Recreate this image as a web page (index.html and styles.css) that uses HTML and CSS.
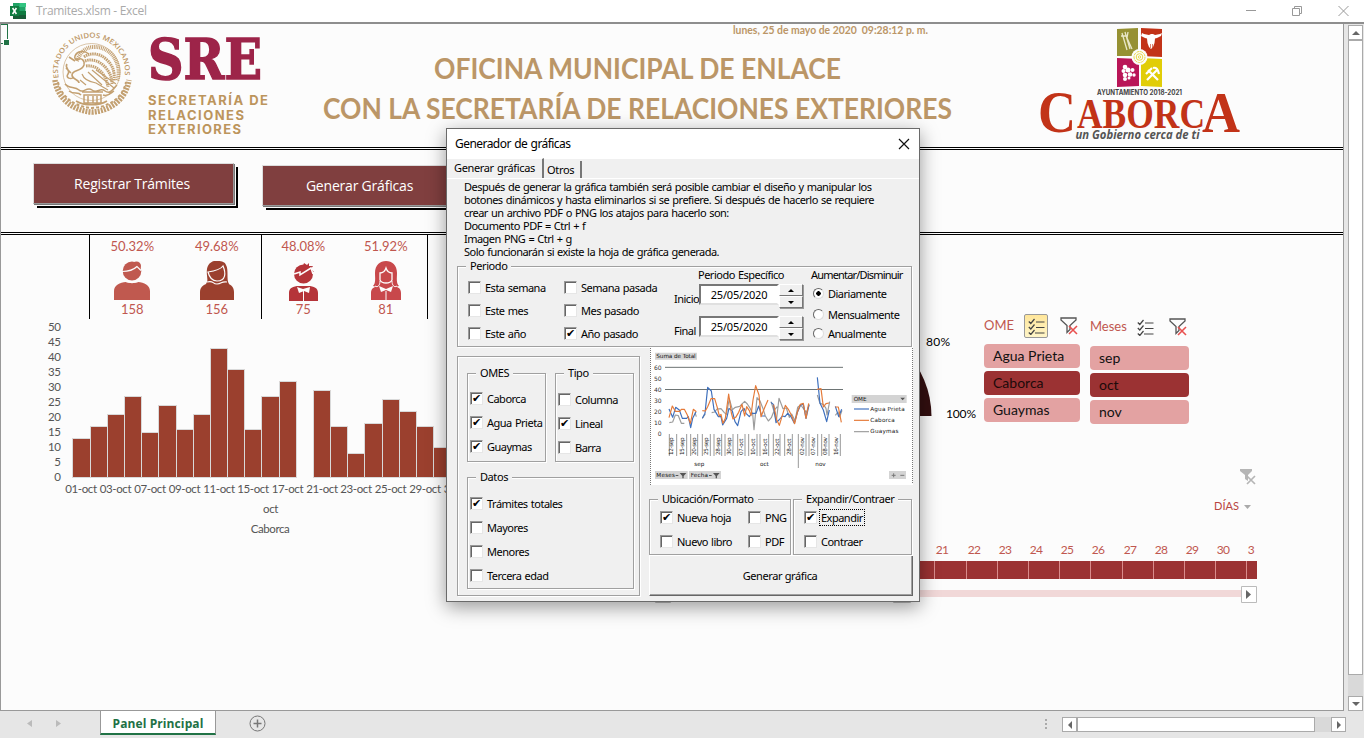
FILE: index.html
```html
<!DOCTYPE html>
<html lang="es">
<head>
<meta charset="utf-8">
<title>Tramites.xlsm - Excel</title>
<link rel="stylesheet" href="styles.css">
</head>
<body>
<svg class="defs" width="0" height="0">
  <defs>
    <symbol id="checks" viewBox="0 0 17 17"><g fill="none" stroke="#444" stroke-width="1.200"><path d="M.8 3.500l2 2L6.500 1M.8 9l2 2 3.700-4.500M.8 14.500l2 2 3.700-4.500M8 4h8.500M8 9.500h8.500M7 15h9.500"/></g></symbol>
    <symbol id="funnel" viewBox="0 0 18 18"><path d="M1 1h15v2l-6 5.500v4l-3 3V8.500L1 3z" fill="none" stroke="#555" stroke-width="1.300"/><path d="M9 9l8 8M17 9l-8 8" stroke="#e8504f" stroke-width="1.600"/></symbol>
  </defs>
</svg>

<header class="titlebar">
  <svg class="xl" width="16" height="16" viewBox="0 0 16 16"><path fill="#21a366" d="M3 0h12.500v16H3z"/><path fill="#33c481" d="M9.500 0H16v4H9.500z"/><path fill="#107c41" d="M3 4h6.500v8H3zM9.500 8H16v4H9.500z"/><path fill="#185c37" d="M3 12h13v4H3z"/><path fill="#107c41" d="M0 3h9v10H0z"/><path d="M2.600 5l3.800 6M6.400 5l-3.800 6" stroke="#fff" stroke-width="1.500"/></svg>
  <span class="app-title">Tramites.xlsm - Excel</span>
  <svg class="win" width="104" height="12" viewBox="0 0 104 12" fill="none" stroke="#999"><path d="M0 5.500h10M46.500 3.500h7v7h-7zM48.500 3V1.500h7v7H54M92.500 1l10 10M102.500 1l-10 10"/></svg>
</header>

<div class="main">
<main class="sheet">
  <i class="cell"></i>
  <section class="band head">
    <svg class="sre" width="222" height="110" viewBox="50 28 222 110">
      <path id="ring" d="M58.700 78A33.500 33.500 0 1 1 124.300 78" fill="none"/>
      <text class="seal"><textPath href="#ring" textLength="116" lengthAdjust="spacingAndGlyphs">ESTADOS UNIDOS MEXICANOS</textPath></text>
      <g fill="none" stroke="#c3a071">
        <circle cx="91.500" cy="72" r="28.500" stroke-width=".6"/>
        <path d="M55 80c2 17 17 31 37 32 19-1 34-13 37-32" stroke-width="5.500" stroke-dasharray="2 1.100"/>
        <path d="M58 82c3 14 16 25 34 26 18-1 31-11 34-26" stroke-width="2" stroke-dasharray="3 2"/>
        <path d="M77 61c2-6 6-11 11-13 8-3 20 0 26 9 5 8 6 16 3 24" stroke-width="4" stroke-dasharray="1 .8"/>
        <path d="M84 57c7-5 16-4 23 3 6 6 8 12 7 21M85 61c8-3 16 1 21 7 4 5 6 10 6 16M86 66c8-1 13 3 17 8 3 4 4 8 5 13" stroke-width="3" stroke-dasharray="1.500 .7"/>
        <path d="M89 54c-5-4-12-3-14 2-1 3 1 4 4 3s6 2 5 6c-2 7-12 4-12 10 0 5 7 4 7 8M67 64c-3 4 4 6 1 10s3 6 6 3M69 57l6 4M66 68l5 5" stroke-width="1.600"/>
        <path d="M82 74c2 6 8 8 14 9l12 7M80 80l6 5M92 70l22 18M96 70l20 14M88 72l14 13" stroke-width="1.200"/>
        <path d="M65 84c4 5 10 2 14 6s8-4 13 0 8-3 13 1 8-2 12-6M69 91c5 4 9 0 12 4M103 95c5 2 8-2 11-4M84 95h17v8H84zM82 92h21M76 101c8 5 23 5 31 0M88 96v7M93 96v7M97 96v7" stroke-width="1.500"/>
      </g>
      <text class="sre-name" x="148" y="79" textLength="114" lengthAdjust="spacingAndGlyphs">SRE</text>
      <g class="sre-sub"><text x="148" y="105" textLength="120">SECRETARÍA DE</text><text x="148" y="119.500" textLength="96">RELACIONES</text><text x="148" y="134" textLength="93">EXTERIORES</text></g>
    </svg>
    <svg class="office" width="640" height="106" viewBox="318 24 640 106">
      <text class="date" xml:space="preserve" x="733" y="34" textLength="195" lengthAdjust="spacingAndGlyphs">lunes, 25 de mayo de 2020  09:28:12 p. m.</text>
      <text x="434" y="79" textLength="407" lengthAdjust="spacingAndGlyphs">OFICINA MUNICIPAL DE ENLACE</text>
      <text x="323" y="119" textLength="629" lengthAdjust="spacingAndGlyphs">CON LA SECRETARÍA DE RELACIONES EXTERIORES</text>
    </svg>
    <svg class="caborca" width="206" height="118" viewBox="1036 26 206 118">
      <path fill="#969133" d="M1117 29l21-1v28h-21z"/><path fill="#c23318" d="M1141 28l21 1v28l-21-1z"/><path fill="#b91657" d="M1117 58l22 1v27l-22 1z"/><path fill="#e1cd08" d="M1141 58l21 1v28l-21-1z"/>
      <circle cx="1139.500" cy="57" r="8" fill="#fcfcfc"/><g fill="none" stroke="#e8d94a"><circle cx="1139.500" cy="57" r="5.500" stroke-dasharray="3 .7"/><circle cx="1139.500" cy="57" r="3.300"/><circle cx="1139.500" cy="57" r="1.200"/></g>
      <path d="M1122 33l5 17M1125 32l5 17M1128 32l-1 6 5 11M1121 36h6" stroke="#e8e7c8" stroke-width="1.300" fill="none"/>
      <path fill="#fff" d="M1142 33l2 1 5 1 2-1h2l2 1 5-1 2-1-1 3-4 2-2 .5-.5 4.500-1.500 4-2 2-2-2-1.500-4-.5-4.500-2-.5-4-2z"/><path d="M1150.500 44v4M1152.500 44v4" stroke="#c23318" stroke-width=".6"/>
      <g fill="#fff"><circle cx="1125" cy="67" r="2.300"/><circle cx="1123.500" cy="71" r="2"/><circle cx="1128" cy="70" r="2.500"/><circle cx="1132.500" cy="70" r="2"/><circle cx="1125" cy="75" r="2.300"/><circle cx="1130" cy="74.500" r="2.300"/><circle cx="1134" cy="75" r="1.700"/><circle cx="1125" cy="79" r="2"/><circle cx="1129" cy="78" r="1.500"/></g>
      <path d="M1147 80l10-10M1158 80l-10-10M1146 74l6-6M1153 68c3-1 5 1 6 6" stroke="#fff" stroke-width="2.200" fill="none"/>
      <text class="ayto" x="1097" y="95" textLength="85" lengthAdjust="spacingAndGlyphs">AYUNTAMIENTO 2018-2021</text>
      <g class="cab"><text x="1038" y="132" font-size="59" textLength="38" lengthAdjust="spacingAndGlyphs">C</text><text x="1077" y="127.500" font-size="43" textLength="128" lengthAdjust="spacingAndGlyphs">ABORC</text><text x="1202" y="131.500" font-size="57" textLength="38" lengthAdjust="spacingAndGlyphs">A</text></g>
      <text class="slogan" x="1075.500" y="139" textLength="124" lengthAdjust="spacingAndGlyphs">un Gobierno cerca de ti</text>
    </svg>
  </section>
  <section class="band actions">
    <button class="act">Registrar Trámites</button>
    <button class="act low">Generar Gráficas</button>
  </section>

  <section class="body">
    <div class="left">
      <div class="stats">
        <div class="pair">
          <div class="stat"><b>50.32%</b>
            <svg width="36" height="40" viewBox="0 0 36 40"><g fill="#c0594f"><ellipse cx="18" cy="10" rx="9.300" ry="9.500"/><circle cx="22.500" cy="5" r="4.500"/><path d="M0 39V30c0-6 6-8.500 12-9 4 1.500 8 1.500 12 0 6 .5 12 3 12 9v9z"/></g><path d="M8 10.500c6 0 11-1 15-5l4 4" fill="none" stroke="#fcfcfc" stroke-width="1.200"/><path d="M9 18c4 4 14 4 18 0" fill="none" stroke="#fcfcfc" stroke-width="1.800"/></svg><b>158</b></div>
          <div class="stat"><b>49.68%</b>
            <svg width="36" height="40" viewBox="0 0 36 40"><g fill="#9b402e"><path d="M7 23c3-4 0-8 1-15C9 2 14-1 19 0c4 0 7 1 8 4 3 5 0 14 3 19l-9 1h-6z"/><path d="M1 39V31c0-6 5-8.500 11-9 4 2 9 2 13 0 6 .5 10 3 10 9v8z"/></g><path d="M9 11c7-1 12-2 15-6 3 7 3 15-6 15-6 0-8-5-9-9zM8 21c7-2 5 2 10 2s4-3 10-2" fill="none" stroke="#fcfcfc" stroke-width="1.200"/></svg><b>156</b></div>
        </div>
        <div class="pair kids">
          <div class="stat"><b>48.08%</b>
            <svg width="32" height="40" viewBox="0 0 32 40"><g fill="#b53439"><circle cx="16.500" cy="13" r="9.500"/><path d="M16 5l1-3 3 2 2-2v3h4l-2 3 3 3-6-1zM2 40V32c0-5 4-7 10-7h9c6 0 10 2 10 7v8z"/></g><path d="M7 13l6-2v3l11-7 2 6" fill="none" stroke="#fcfcfc" stroke-width="1.500"/><path fill="#fcfcfc" d="M10 26l6 2 7-2-1 6-5-2-5 2zM16 30h1v10h-1z"/></svg><b>75</b></div>
          <div class="stat"><b>51.92%</b>
            <svg width="32" height="40" viewBox="0 0 32 40"><g fill="#c8484b"><path d="M3 25c3-3 2-8 2-13C5 4 10 0 16 0s11 4 11 12c0 5-1 10 2 13l-8 2H11zM1 39V32c0-5 4-7 9-7h12c5 0 9 2 9 7v7z"/></g><path d="M10 12c3 0 5-2 6-5 1 3 3 5 6 5v7c-2 4-10 4-12 0z" fill="none" stroke="#fcfcfc" stroke-width="1.300"/><path d="M5 25c3 2 5-1 5-5M27 25c-3 2-5-1-5-5" fill="none" stroke="#fcfcfc"/><path fill="#fcfcfc" d="M9 25l7 3 7-3-2 6-5-2-5 2zM15.500 30h1v9h-1z"/></svg><b>81</b></div>
        </div>
      </div>
      <svg class="bars" width="446" height="220" viewBox="1 320 446 220">
        <g fill="#9b402e" stroke="#d9d9d9">
          <path d="M72.500 477.500v-39h18v39zM90.500 477.500v-51h17v51zM107.500 477.500v-63h17v63zM124.500 477.500v-81h17v81zM141.500 477.500v-45h17v45zM158.500 477.500v-72h18v72zM176.500 477.500v-48h17v48zM193.500 477.500v-63h17v63zM210.500 477.500v-129h17v129zM227.500 477.500v-108h17v108zM244.500 477.500v-48h17v48zM261.500 477.500v-81h18v81zM279.500 477.500v-96h17v96zM313.500 477.500v-87h17v87zM330.500 477.500v-51h17v51zM347.500 477.500v-24h17v24zM364.500 477.500v-54h18v54zM382.500 477.500v-78h17v78zM399.500 477.500v-66h17v66zM416.500 477.500v-51h17v51zM433.500 477.500v-30h17v30z"/>
        </g>
        <g class="axis end"><text x="60.500" y="331">50</text><text x="60.500" y="346">45</text><text x="60.500" y="361">40</text><text x="60.500" y="376">35</text><text x="60.500" y="391">30</text><text x="60.500" y="406">25</text><text x="60.500" y="421">20</text><text x="60.500" y="436">15</text><text x="60.500" y="451">10</text><text x="60.500" y="466">5</text><text x="60.500" y="481">0</text></g>
        <g class="axis mid"><text x="81" y="493">01-oct</text><text x="115.500" y="493">03-oct</text><text x="150" y="493">07-oct</text><text x="184.500" y="493">09-oct</text><text x="219" y="493">11-oct</text><text x="253" y="493">15-oct</text><text x="287.500" y="493">17-oct</text><text x="322" y="493">21-oct</text><text x="356" y="493">23-oct</text><text x="390.500" y="493">25-oct</text><text x="425" y="493">29-oct</text><text x="459.500" y="493">31-oct</text><text x="270.500" y="513">oct</text><text x="270" y="533">Caborca</text></g>
      </svg>
    </div>

    <div class="right">
      <div class="filters">
        <svg class="gauge" width="114" height="110" viewBox="870 320 114 110"><path d="M837 416V322a94.500 94.500 0 0 1 94.500 94z" fill="#330f10"/><text x="926" y="346" textLength="24">80%</text><text x="946" y="418" textLength="30">100%</text></svg>
        <div class="slicer ome">
          <div class="sl-head"><span>OME</span><i class="multi on"><svg width="17" height="17"><use href="#checks"/></svg></i><svg width="18" height="18"><use href="#funnel"/></svg></div>
          <div class="item">Agua Prieta</div><div class="item sel">Caborca</div><div class="item">Guaymas</div>
        </div>
        <div class="slicer mes">
          <div class="sl-head"><span>Meses</span><i class="multi"><svg width="17" height="17"><use href="#checks"/></svg></i><svg width="18" height="18"><use href="#funnel"/></svg></div>
          <div class="item">sep</div><div class="item sel">oct</div><div class="item">nov</div>
        </div>
      </div>
      <svg class="timeline" width="610" height="140" viewBox="650 466 610 140">
        <path d="M1240 469h12v2l-4 4v6l-3-2v-4l-5-4z" fill="#b5b5b5"/><path d="M1247 476l8 8M1255 476l-8 8" stroke="#b5b5b5" stroke-width="1.700"/>
        <text class="days" x="1214" y="510" textLength="25" lengthAdjust="spacingAndGlyphs">DÍAS</text><path d="M1244 505h7l-3.500 4z" fill="#aaa"/>
        <g class="nums"><text x="942" y="554">21</text><text x="974" y="554">22</text><text x="1005" y="554">23</text><text x="1036" y="554">24</text><text x="1067" y="554">25</text><text x="1098" y="554">26</text><text x="1130" y="554">27</text><text x="1161" y="554">28</text><text x="1192" y="554">29</text><text x="1223" y="554">30</text><text x="1251" y="554">3</text></g>
        <path fill="#9b3233" d="M656 561h601v18H656z"/>
        <path stroke="#d98c8c" d="M934.500 561v18M966.500 561v18M997.500 561v18M1028.500 561v18M1059.500 561v18M1090.500 561v18M1122.500 561v18M1153.500 561v18M1184.500 561v18M1215.500 561v18M1246.500 561v18"/>
        <path fill="#f1d8d8" d="M671 590h570v7H671z"/>
        <path fill="#fff" stroke="#bbb" d="M1241.500 586.500h15v16h-15zM655.500 586.500h15v16h-15zM893.500 586.500h17v16h-17z"/><path fill="#666" d="M1246 590l5 4.500-5 4.500z"/>
      </svg>
    </div>
  </section>

  <div class="dialog" role="dialog">
    <div class="d-title"><span>Generador de gráficas</span><svg width="12" height="12" viewBox="0 0 12 12"><path d="M1 1l10 10M11 1L1 11" stroke="#111" stroke-width="1.200"/></svg></div>
    <nav class="tabs"><span class="tab cur">Generar gráficas</span><span class="tab">Otros</span></nav>
    <div class="d-body">
      <p class="help">Después de generar la gráfica también será posible cambiar el diseño y manipular los<br>botones dinámicos y hasta eliminarlos si se prefiere. Si después de hacerlo se requiere<br>crear un archivo PDF o PNG los atajos para hacerlo son:<br>Documento PDF = Ctrl + f<br>Imagen PNG = Ctrl + g<br>Solo funcionarán si existe la hoja de gráfica generada.</p>
      <fieldset class="frame periodo"><legend>Periodo</legend>
        <div class="col c1"><label class="ck">Esta semana</label><label class="ck">Este mes</label><label class="ck">Este año</label></div>
        <div class="col c2"><label class="ck">Semana pasada</label><label class="ck">Mes pasado</label><label class="ck on">Año pasado</label></div>
        <div class="range">
          <div class="r-title">Periodo Específico</div>
          <div class="r-row"><span class="lab">Inicio</span><span class="field">25/05/2020</span><span class="spin"><i class="up"></i><i class="dn"></i></span></div>
          <div class="r-row"><span class="lab">Final</span><span class="field">25/05/2020</span><span class="spin"><i class="up"></i><i class="dn"></i></span></div>
        </div>
        <div class="step"><div class="r-title">Aumentar/Disminuir</div><label class="rd on">Diariamente</label><label class="rd">Mensualmente</label><label class="rd">Anualmente</label></div>
      </fieldset>
      <div class="lower">
        <div class="frame opts">
          <fieldset class="frame omes"><legend>OMES</legend><label class="ck on">Caborca</label><label class="ck on">Agua Prieta</label><label class="ck on">Guaymas</label></fieldset>
          <fieldset class="frame tipo"><legend>Tipo</legend><label class="ck">Columna</label><label class="ck on">Lineal</label><label class="ck">Barra</label></fieldset>
          <fieldset class="frame datos"><legend>Datos</legend><label class="ck on">Trámites totales</label><label class="ck">Mayores</label><label class="ck">Menores</label><label class="ck">Tercera edad</label></fieldset>
        </div>
        <div class="rightcol">
          <svg class="mini" width="263" height="137" viewBox="15 9 789 411">
            <path fill="#fff" d="M15 9h789v411H15z"/><path d="M16.500 9v411M802.500 9v408" stroke="#777" stroke-width="3" stroke-dasharray="3 3"/>
            <path fill="#d4d4d4" d="M30 23h126v21H30zM620 150h165v24H620zM30 378h98v24H30zM132 378h96v24h-96zM732 378h51v24h-51z"/>
            <path d="M60 67h534M60 133.500h534" stroke="#6d7474" stroke-width="3"/>
            <g class="m-axis"><text x="50" y="74">60</text><text x="50" y="107">50</text><text x="50" y="140">40</text><text x="50" y="174">30</text><text x="50" y="207">20</text><text x="50" y="240">10</text><text x="50" y="273">0</text></g>
            <g fill="none" stroke-width="3.500" stroke-linejoin="round">
              <path stroke="#9c9c9c" d="M73 233l10-2 8-21 9 2 9 23h9M150 203l4 12M172 220l9-13M200 203l9-2 7-9 12-1 10 12 6 5 9-47 9 33 9-7 13-3 8-8 7-7 8 8 9 14 7 15 4 48 9-96 9 10 8 20 8 25 9 15 9-10 9-23 9-10M378 170l8 25 8 33 8-68 12 31 10-2 9 28 7-10 10 20 8-40 9-7 8 10 9 12 9-24M517 150l8 25 10 3 8 12 3 20 8-40M571 211l8-10 5 15 7-20"/>
              <path stroke="#3d6fbd" d="M72 192l11 25 9-30 11 8 9 25h13l5-5 7 33 6-28 10-20M172 220l8-15 8-78 11 11 8 55 13 22h8l5 25 12-20 7-30 10 8 8 32 8 12 10-42 9-10 6 15 10 10 7-10h13l8-22 9 30h10M378 172l7 6 8 55 9-8 10-12 8 2 8-10 10 10 10 20 10-35 9-20 8-2 8 42 9-40M517 97l8 78 10 20 10 35 8-35M571 184l10 31 9-22"/>
              <path stroke="#e57a38" d="M72 218l10-35 9 16h13l5-6h9l9 17 9 25 9-42 9 7M172 197l9 1 7-13 10-24h11l8 27 6 25 5-5 6 27 7-15 10-73 8 57 5 18 8-5 9-15 10-24 8 35 6-28 8 12 5 15 6-47 8-43 10 28 6 65 12-30 9-20M386 179l9 45 8 17 9-30 9-30 9 12 9 17 10 26 8-35 9-23 9-3 8 45 8-45M516 133l12-2 7 55 8-10 9-2M571 186h9l9 46"/>
            </g>
            <path d="M73 267v66M95 267v66M125 267v66M137 267v66M158 267v66M172 267v66M196 267v66M207 267v66M230 267v66M240 267v66M264 267v66M278 267v66M300 267v66M311 267v66M336 267v66M345 267v66M371 267v66M385 267v66M405 267v66M419 267v66M442 267v66M460 267v102M483 267v66M492 267v66M518 267v66M530 267v66M552 267v66M586 267v66" stroke="#666" stroke-width="2"/>
            <g class="m-day"><text transform="translate(83 330) rotate(-90)">12-sep</text><text transform="translate(118 330) rotate(-90)">15-sep</text><text transform="translate(153 330) rotate(-90)">20-sep</text><text transform="translate(189 330) rotate(-90)">25-sep</text><text transform="translate(224 330) rotate(-90)">28-sep</text><text transform="translate(259 330) rotate(-90)">30-sep</text><text transform="translate(295 330) rotate(-90)">07-oct</text><text transform="translate(330 330) rotate(-90)">10-oct</text><text transform="translate(366 330) rotate(-90)">16-oct</text><text transform="translate(401 330) rotate(-90)">22-oct</text><text transform="translate(437 330) rotate(-90)">28-oct</text><text transform="translate(476 330) rotate(-90)">02-nov</text><text transform="translate(510 330) rotate(-90)">07-nov</text><text transform="translate(545 330) rotate(-90)">08-nov</text><text transform="translate(580 330) rotate(-90)">16-nov</text></g>
            <g class="m-lab"><text x="34" y="39" textLength="118">Suma de Total</text><text x="148" y="363">sep</text><text x="345" y="363">oct</text><text x="511" y="363">nov</text><text x="626" y="168">OME</text><text x="676" y="198" textLength="103">Agua Prieta</text><text x="676" y="232" textLength="73">Caborca</text><text x="676" y="265" textLength="84">Guaymas</text><text x="34" y="396" textLength="56">Meses</text><text x="137" y="396" textLength="52">Fecha</text></g>
            <path d="M627 192h45" stroke="#3d6fbd" stroke-width="3.500"/><path d="M627 226h45" stroke="#e57a38" stroke-width="3.500"/><path d="M627 260h45" stroke="#9c9c9c" stroke-width="3.500"/>
            <path fill="#555" d="M766 158h14l-7 8zM104 384h20l-8 9v7h-4v-7zM204 384h20l-8 9v7h-4v-7zM92 390h8v3h-8zM192 390h8v3h-8z"/><path d="M740 391h12M746 385v12M766 391h12" stroke="#777" stroke-width="3"/>
          </svg>
          <div class="fmt">
            <fieldset class="frame ubi"><legend>Ubicación/Formato</legend><label class="ck on">Nueva hoja</label><label class="ck">PNG</label><label class="ck">Nuevo libro</label><label class="ck">PDF</label></fieldset>
            <fieldset class="frame exp"><legend>Expandir/Contraer</legend><label class="ck on"><span class="focus">Expandir</span></label><label class="ck">Contraer</label></fieldset>
          </div>
          <button class="go">Generar gráfica</button>
        </div>
      </div>
    </div>
  </div>
</main>
<aside class="vscroll"><i class="sb"><b class="t-up"></b></i><i class="thumb"></i><i class="track"></i><i class="sb"><b class="t-dn"></b></i></aside>
</div>

<footer class="foot">
  <svg width="100" height="27" viewBox="0 0 100 27"><path fill="#bbb" d="M32 9v7l-5-3.500zM56 9v7l5-3.500z"/></svg>
  <div class="sheet-tab">Panel Principal</div>
  <svg class="plus" width="17" height="17" viewBox="0 0 17 17" fill="none" stroke="#777"><circle cx="8.500" cy="8.500" r="7.500"/><path d="M8.500 4.500v8M4.500 8.500h8" stroke-width="1.500"/></svg>
  <svg class="dots" width="3" height="11" viewBox="0 0 3 11"><path fill="#aaa" d="M0 0h2v2H0zM0 4h2v2H0zM0 8h2v2H0z"/></svg>
  <div class="hscroll"><i class="sb"><b class="t-lf"></b></i><i class="thumb"></i><i class="track"></i><i class="sb"><b class="t-rt"></b></i></div>
</footer>
</body>
</html>
```
FILE: styles.css
```css
*, *::before { box-sizing: border-box; }
body { margin: 0; width: 1364px; height: 738px; overflow: hidden; background: #e6e6e6; font-family: Lato, "Open Sans", sans-serif; display: flex; flex-direction: column; }
i, b { font-style: normal; font-weight: normal; }
.defs { position: absolute; }
button { font: inherit; padding: 0; margin: 0; }

.titlebar { flex: none; height: 24px; background: #fff; border-bottom: 2px solid #8e8e8e; display: flex; align-items: center; padding-left: 10px; }
.app-title { margin: -1px 0 0 10px; font: 12px "Open Sans", sans-serif; color: #aaa; letter-spacing: -.3px; flex: 1; }
.win { margin-right: 14px; }

.main { flex: none; height: 687px; display: flex; }
.sheet { position: relative; width: 1344px; background: #fcfcfc; border: solid #999; border-width: 0 1px 1px; overflow: hidden; }
.cell { position: absolute; left: 0; top: 0; width: 7px; height: 20px; border: 1px solid #217346; border-left: 0; }
.cell::after { content: ""; position: absolute; right: -2px; bottom: -2px; width: 5px; height: 5px; background: #217346; border: 1px solid #fff; border-width: 1px 0 0 1px; }
.band { border-bottom: 3px double #000; display: flex; align-items: flex-start; }
.head { height: 126px; }
.head svg { overflow: visible; }
.sre { margin: 4px 0 0 49px; }
.seal { font: 600 7px "Open Sans", sans-serif; fill: #bd9765; }
.sre-name { font: bold 56px "DejaVu Serif", serif; fill: #9d2449; stroke: #9d2449; stroke-width: 1.5; }
.sre-sub { font: bold 13px Inter, sans-serif; fill: #bc955c; }
.office { margin-left: 46px; font: bold 29px Lato, sans-serif; fill: #bb9667; }
.date { font: bold 10.500px Lato, sans-serif; }
.caborca { margin: 2px 0 0 78px; }
.ayto { font: bold 7px Inter, sans-serif; fill: #444; }
.cab { font-family: "Liberation Serif", serif; font-weight: bold; fill: #c23318; }
.slogan { font: italic bold 12.500px "Open Sans", sans-serif; fill: #555; }

.actions { height: 85px; padding: 13px 0 0 32px; gap: 28px; }
.act { width: 201px; height: 41px; background: #803f3f; color: #fff; border: 1px solid; border-color: #ddd #999 #999 #ddd; padding-right: 3px; font: 14px "Open Sans", sans-serif; letter-spacing: -.2px; box-shadow: 1px 1px 0 #777, 2px 2px 0 #fcfcfc, 4px 4px 0 #000; }
.low { margin-top: 2px; padding-right: 6px; }

.body { display: flex; }
.left { width: 446px; }
.stats { display: flex; margin-left: 88px; height: 84px; color: #c0574f; font-size: 13px; }
.pair { display: flex; width: 172px; border-left: 1px solid #000; }
.pair:first-child { padding-right: 2px; }
.kids { width: 167px; border-right: 1px solid #000; }
.stat { flex: 1; display: flex; flex-direction: column; align-items: center; }
.stat svg { flex: none; }
.stat b { line-height: 23px; height: 26px; }
.stat svg + b { line-height: 17px; height: 18px; }
.bars { display: block; margin-top: 1px; }
.axis { font: 11.500px Lato, sans-serif; fill: #555; letter-spacing: -.4px; }
.end { text-anchor: end; }
.mid { text-anchor: middle; }

.right { width: 897px; padding: 75px 0 0 203px; }
.filters { display: flex; align-items: flex-start; height: 156px; padding-left: 220px; }
.gauge { margin-top: 10px; font: 12px Lato, sans-serif; }
.slicer { width: 96px; font-size: 14px; }
.mes { width: 99px; margin: 2px 0 0 10px; }
.sl-head { display: flex; align-items: center; height: 34px; padding-bottom: 2px; color: #c0574f; font-size: 13px; }
.sl-head span { width: 40px; margin-top: -2px; }
.mes .sl-head span { width: 43px; }
.mes .sl-head { padding-bottom: 4px; }
.multi { width: 24px; height: 24px; display: grid; place-items: center; margin-right: 12px; }
.multi.on { background: linear-gradient(#ffe69a, #fff5c8); border: 1px solid #999; border-radius: 2px; }
.item { height: 24px; margin-bottom: 3px; border-radius: 4px; background: #e3a2a2; padding-left: 9px; line-height: 24px; color: #111; }
.item.sel { background: #9b3233; color: #1c0a0a; }
.timeline { display: block; }
.days { font: 12px Lato, sans-serif; fill: #b8443f; }
.nums { font: 12px Lato, sans-serif; letter-spacing: -.6px; fill: #c0574f; text-anchor: middle; }

.dialog { position: absolute; left: 445px; top: 104px; width: 474px; height: 474px; background: #f0f0f0; border: 1px solid #6a6a6a; box-shadow: 0 5px 18px rgba(0,0,0,.4); font: 11px "Noto Sans", sans-serif; letter-spacing: -.5px; word-spacing: .8px; color: #000; }
.d-title { height: 30px; background: #fff; display: flex; align-items: center; justify-content: space-between; padding: 0 9px 1px 8px; font-size: 12px; letter-spacing: -.55px; }
.tabs { display: flex; height: 20px; align-items: flex-end; border-bottom: 1px solid #fff; padding-left: 1px; white-space: nowrap; }
.tab { height: 17px; padding: 0 6px 0 3px; line-height: 18px; border-right: 2px solid #777; letter-spacing: -.3px; }
.tab.cur { height: 20px; width: 96px; padding: 0 0 0 6px; line-height: 17px; border-top: 1px solid #fff; letter-spacing: -.35px; }
.d-body { padding: 1px 6px 0 10px; }
.help { margin: 0 0 0 7px; line-height: 13px; white-space: nowrap; letter-spacing: -.53px; }
.frame { border: 1px solid #a0a0a0; box-shadow: inset 1px 1px 0 #fff, 1px 1px 0 #fff; margin: 0; padding: 0; min-width: 0; }
.frame > legend { margin-left: 8px; padding: 0 4px; line-height: 14px; height: 14px; background: #f0f0f0; letter-spacing: -.42px; }
.periodo { width: 455px; height: 88px; display: flex; margin-top: 1px; }
.ck { display: flex; align-items: center; height: 13px; white-space: nowrap; line-height: 13px; }
.ck::before { content: ""; flex: none; width: 13px; height: 13px; margin-right: 4px; background: #fff; border: 1px solid; border-color: #999 #e6e6e6 #e6e6e6 #999; box-shadow: inset 1px 1px 0 #666; font: bold 11px/11px "DejaVu Sans", sans-serif; }
.ck.on::before { content: "✔"; text-indent: 1px; letter-spacing: 0; }
.col { display: flex; flex-direction: column; gap: 10px; padding-top: 8px; }
.c1 { width: 96px; margin-left: 10px; }
.c2 { width: 110px; }
.range { width: 137px; }
.r-title { line-height: 13px; margin-top: -5px; white-space: nowrap; }
.step .r-title { letter-spacing: -.82px; }
.range .r-title { padding-left: 24px; }
.r-row { display: flex; height: 24px; margin: 3px 0 8px; }
.r-row + .r-row { margin-top: 0; }
.lab { width: 25px; padding-top: 7px; }
.field { width: 80px; height: 21px; background: #fff; border: 2px solid; border-color: #777 #fff #e0e0e0 #777; text-align: center; line-height: 18px; letter-spacing: -.2px; }
.spin { width: 24px; }
.spin i { display: grid; place-items: center; height: 12px; border: 1px solid; border-color: #fff #777 #777 #fff; box-shadow: 1px 1px 0 #999; }
.up::after, .dn::after { content: ""; border: solid transparent; border-width: 0 3px 3px; border-bottom-color: #000; }
.dn::after { border-width: 3px 3px 0; border-top-color: #000; }
.step .rd { display: flex; align-items: center; height: 13px; margin: 6px 0 8px 2px; }
.step .rd + .rd { margin-bottom: 6px; }
.rd::before { content: ""; width: 11px; height: 11px; border-radius: 50%; background: #fff; border: 1px solid; border-color: #666 #ddd #ddd #666; margin-right: 4px; }
.rd.on::before { background: radial-gradient(circle, #000 2px, #fff 2.500px); }
.lower { display: flex; gap: 9px; margin-top: 1px; }
.opts { width: 183px; height: 240px; margin-top: 8px; padding: 9px; display: grid; grid-template-columns: 79px 79px; grid-template-rows: 96px 119px; gap: 8px 9px; align-content: start; }
.omes .ck, .tipo .ck { margin: 11px 0 11px 2px; }
.datos { grid-column: 1 / 3; }
.datos .ck { margin: 11px 0 11px 2px; }
.datos legend + .ck { margin-top: 13px; }
.omes legend + .ck { margin-top: 12px; }
.tipo legend + .ck { margin-top: 13px; }
.tipo .ck + .ck { margin-top: 10px; }
.rightcol { width: 264px; }
.mini { display: block; margin-left: 1px; }
.m-axis { font: 18px "DejaVu Sans", sans-serif; text-anchor: end; fill: #333; letter-spacing: 0; }
.m-day { font: 17px "DejaVu Sans", sans-serif; letter-spacing: -1px; fill: #222; }
.m-lab { font: 17px "DejaVu Sans", sans-serif; letter-spacing: 0; word-spacing: 0; fill: #111; }
.fmt { display: flex; gap: 2px; margin-top: 7px; }
.ubi { width: 142px; height: 63px; display: grid; grid-template-columns: 88px 50px; padding: 5px 0 0 10px; row-gap: 11px; align-content: start; }
.exp { width: 119px; height: 63px; padding: 5px 0 0 10px; display: grid; row-gap: 11px; align-content: start; }
.ubi > legend, .exp > legend { margin-left: -2px; }
.focus { outline: 1px dotted #000; outline-offset: 1px; }
.go { display: block; width: 264px; height: 41px; background: #f0f0f0; border: 1px solid; border-color: #fff #666 #666 #fff; box-shadow: inset -1px -1px 0 #a0a0a0; letter-spacing: -.38px; padding-right: 2px; }

.vscroll { width: 20px; display: flex; flex-direction: column; padding: 1px 1px 0 4px; }
.sb { flex: none; display: grid; place-items: center; width: 15px; height: 15px; background: #fff; border: 1px solid #aaa; }
.thumb { background: #fff; border: 1px solid #aaa; height: 635px; }
.track { flex: 1; background: #d9d9d9; }
.sb b { border: solid transparent; }
.sb .t-up { border-width: 0 4px 4px; border-bottom-color: #666; }
.sb .t-dn { border-width: 4px 4px 0; border-top-color: #666; }
.sb .t-lf { border-width: 4px 4px 4px 0; border-right-color: #666; }
.sb .t-rt { border-width: 4px 0 4px 4px; border-left-color: #666; }

.foot { height: 27px; display: flex; align-items: flex-start; }
.sheet-tab { width: 116px; height: 24px; background: #fff; border: solid #999; border-width: 0 1px; border-bottom: 2px solid #217346; color: #1e7145; font: bold 12px/25px "Open Sans", sans-serif; letter-spacing: .1px; text-align: center; white-space: nowrap; }
.plus { margin: 4px 0 0 33px; }
.dots { margin: 8px 0 0 779px; }
.hscroll { display: flex; width: 284px; height: 15px; margin: 6px 0 0 14px; }
.hscroll .thumb { width: 238px; height: 15px; }
```
